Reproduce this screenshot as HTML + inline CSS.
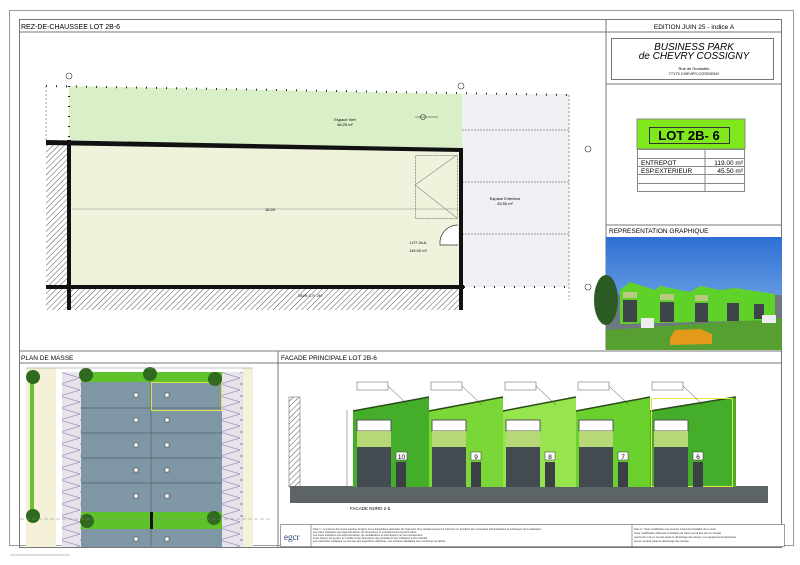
<!DOCTYPE html>
<html><head><meta charset="utf-8"><style>
html,body{margin:0;padding:0;background:#fff;width:800px;height:565px;overflow:hidden}
svg{display:block;font-family:"Liberation Sans",sans-serif}
</style></head><body>
<svg width="800" height="565" viewBox="0 0 800 565" xmlns="http://www.w3.org/2000/svg">
<defs>
<pattern id="h" width="4" height="4" patternUnits="userSpaceOnUse" patternTransform="rotate(45)"><rect width="4" height="4" fill="#fff"/><line x1="0" y1="0" x2="0" y2="4" stroke="#555" stroke-width="1"/></pattern>
<pattern id="z" width="20" height="12" patternUnits="userSpaceOnUse"><rect width="20" height="12" fill="#e6e3ea"/><path d="M0 0L20 6L0 12" fill="none" stroke="#a37fb0" stroke-width="0.6"/></pattern>
<linearGradient id="sky" x1="0" y1="0" x2="0" y2="1"><stop offset="0" stop-color="#2f6fd6"/><stop offset="1" stop-color="#8fbfe8"/></linearGradient>
</defs>
<!-- frames -->
<rect x="9.5" y="10.5" width="784" height="535" fill="none" stroke="#999"/>
<rect x="19.5" y="19.5" width="762" height="528" fill="none" stroke="#777"/>
<line x1="19" y1="32" x2="782" y2="32" stroke="#777"/>
<line x1="606" y1="19" x2="606" y2="350" stroke="#777"/>
<line x1="19" y1="351" x2="782" y2="351" stroke="#777"/>
<line x1="19" y1="363" x2="782" y2="363" stroke="#777"/>
<line x1="278" y1="351" x2="278" y2="547" stroke="#777"/>
<text x="21" y="29" font-size="7">REZ-DE-CHAUSSEE LOT 2B-6</text>
<text x="694" y="29" font-size="6.5" text-anchor="middle">EDITION JUIN 25 - indice A</text>
<!-- title box -->
<rect x="611.5" y="38.5" width="162" height="41" fill="#fff" stroke="#777"/>
<text x="694" y="50" font-size="10" font-style="italic" text-anchor="middle">BUSINESS PARK</text>
<text x="694" y="59" font-size="10" font-style="italic" text-anchor="middle">de CHEVRY COSSIGNY</text>
<text x="694" y="70" font-size="4" text-anchor="middle">Rue de l'Industrie</text>
<text x="694" y="75" font-size="4" text-anchor="middle">77173 CHEVRY-COSSIGNY</text>
<line x1="606" y1="84" x2="782" y2="84" stroke="#777"/>
<!-- LOT -->
<rect x="637" y="119" width="108" height="30" fill="#7ee81c" stroke="#888"/>
<rect x="649.5" y="127.5" width="80" height="16" fill="none" stroke="#333"/>
<text x="689" y="140" font-size="13" font-weight="bold" text-anchor="middle">LOT 2B- 6</text>
<rect x="637.5" y="149.5" width="107" height="42" fill="#fff" stroke="#888"/>
<line x1="705" y1="149" x2="705" y2="192" stroke="#888"/>
<line x1="637" y1="158.5" x2="745" y2="158.5" stroke="#888"/>
<line x1="637" y1="166.5" x2="745" y2="166.5" stroke="#888"/>
<line x1="637" y1="174.5" x2="745" y2="174.5" stroke="#888"/>
<line x1="637" y1="183.5" x2="745" y2="183.5" stroke="#888"/>
<text x="641" y="165" font-size="6.5">ENTREPOT</text>
<text x="641" y="173" font-size="6.5">ESP.EXTERIEUR</text>
<text x="743" y="165" font-size="6.5" text-anchor="end">119.00 m²</text>
<text x="743" y="173" font-size="6.5" text-anchor="end">45.50 m²</text>
<line x1="606" y1="225" x2="782" y2="225" stroke="#777"/>
<text x="609" y="233" font-size="6.5">REPRESENTATION GRAPHIQUE</text>
<!-- photo -->
<rect x="606" y="237" width="176" height="113" fill="url(#sky)"/>
<rect x="606" y="295" width="176" height="55" fill="#6f7880"/>
<path d="M606 330L782 318L782 350L606 350Z" fill="#55a030"/>
<path d="M620 290L630 282L655 290L660 286L690 292L700 286L720 290L735 288L775 294L775 320L620 324Z" fill="#5fd22a"/>
<g fill="#3e4448"><rect x="623" y="300" width="14" height="22"/><rect x="660" y="302" width="14" height="20"/><rect x="695" y="303" width="13" height="19"/><rect x="727" y="303" width="12" height="18"/><rect x="754" y="304" width="10" height="15"/></g>
<g fill="#b9c97f"><rect x="623" y="292" width="14" height="6"/><rect x="660" y="294" width="14" height="6"/><rect x="695" y="295" width="13" height="6"/></g>
<ellipse cx="606" cy="300" rx="12" ry="25" fill="#2c5a25"/>
<rect x="641" y="318" width="13" height="10" fill="#eee"/>
<rect x="762" y="315" width="14" height="8" fill="#eee"/>
<path d="M670 338L675 330L700 329L712 334L712 344L670 345Z" fill="#e39a1a"/>
<!-- floor plan -->
<path d="M69 86L462 94L462 150L69 140Z" fill="#d9efc7"/>
<rect x="462" y="94" width="107" height="193" fill="#eef0f3"/>
<line x1="462" y1="130" x2="569" y2="130" stroke="#999" stroke-dasharray="2,1"/>
<line x1="462" y1="182" x2="569" y2="182" stroke="#999" stroke-dasharray="2,1"/>
<line x1="462" y1="234" x2="569" y2="234" stroke="#999" stroke-dasharray="2,1"/>
<path d="M69 145L462 150L462 287L69 287Z" fill="#eff3dc"/>
<rect x="46" y="140" width="23" height="170" fill="url(#h)"/>
<rect x="69" y="287" width="393" height="23" fill="url(#h)"/>
<path d="M46 140L462 148L462 152L46 145Z" fill="#111"/>
<rect x="67" y="140" width="4" height="170" fill="#111"/>
<rect x="46" y="285" width="418" height="4" fill="#111"/>
<rect x="459" y="148" width="4" height="162" fill="#111"/>
<line x1="46" y1="86" x2="569" y2="95" stroke="#222" stroke-dasharray="1,9" stroke-width="2"/>
<line x1="69" y1="86" x2="69" y2="140" stroke="#222" stroke-dasharray="1,9" stroke-width="2"/>
<line x1="464" y1="287" x2="569" y2="287" stroke="#222" stroke-dasharray="1,9" stroke-width="2"/>
<line x1="46" y1="86" x2="46" y2="140" stroke="#999" stroke-dasharray="2,2"/>
<line x1="569" y1="95" x2="569" y2="300" stroke="#999" stroke-dasharray="2,2"/>
<rect x="415.5" y="155.5" width="42" height="63" fill="none" stroke="#999" stroke-dasharray="2,1"/>
<path d="M457 155L415 185L457 218" fill="none" stroke="#888" stroke-width="0.6"/>
<path d="M458 225A18 18 0 0 0 440 245L458 245" fill="#fff" stroke="#333" stroke-width="0.7"/>
<line x1="72" y1="209" x2="458" y2="209" stroke="#888" stroke-width="0.5"/>
<text x="265" y="211" font-size="4">16.20</text>
<text x="345" y="121" font-size="4" text-anchor="middle">Espace Vert</text>
<text x="345" y="126" font-size="4" text-anchor="middle">46.25 m²</text>
<text x="505" y="200" font-size="4" text-anchor="middle">Espace Exterieur</text>
<text x="505" y="205" font-size="4" text-anchor="middle">45.50 m²</text>
<text x="418" y="244" font-size="4" text-anchor="middle">LOT 2b-6</text>
<text x="418" y="252" font-size="4" text-anchor="middle">119.00 m²</text>
<text x="310" y="297" font-size="4" text-anchor="middle">MUR C.F. 2H</text>
<circle cx="69" cy="76" r="3" fill="none" stroke="#333" stroke-width="0.6"/>
<circle cx="461" cy="86" r="3" fill="none" stroke="#333" stroke-width="0.6"/>
<circle cx="588" cy="149" r="3" fill="none" stroke="#333" stroke-width="0.6"/>
<circle cx="588" cy="287" r="3" fill="none" stroke="#333" stroke-width="0.6"/>
<circle cx="423" cy="117" r="2.5" fill="none" stroke="#333" stroke-width="0.6"/>
<line x1="415" y1="117" x2="438" y2="117" stroke="#333" stroke-width="0.6"/>
<text x="21" y="360" font-size="6.5">PLAN DE MASSE</text>
<text x="281" y="360" font-size="6.5">FACADE PRINCIPALE LOT 2B-6</text>
<!-- plan de masse -->
<rect x="26" y="368" width="30" height="179" fill="#f4f1d8"/>
<rect x="30" y="372" width="4" height="140" fill="#6cc22c"/>
<rect x="243" y="368" width="10" height="179" fill="#f4f1d8"/>
<rect x="62" y="372" width="19" height="175" fill="url(#z)"/>
<rect x="222" y="372" width="21" height="175" fill="url(#z)"/>
<rect x="81" y="372" width="141" height="10" fill="#5fc22a"/>
<rect x="81" y="382" width="141" height="165" fill="#7f97a4"/>
<g stroke="#4f6470" stroke-width="0.7"><line x1="81" y1="408" x2="222" y2="408"/><line x1="81" y1="433" x2="222" y2="433"/><line x1="81" y1="458" x2="222" y2="458"/><line x1="81" y1="483" x2="222" y2="483"/><line x1="151" y1="382" x2="151" y2="547"/></g>
<rect x="151.5" y="382.5" width="70" height="28" fill="none" stroke="#dde04a"/>
<rect x="81" y="512" width="141" height="17" fill="#5fc22a"/>
<rect x="150" y="512" width="3" height="17" fill="#111"/>
<g fill="#fff" stroke="#333" stroke-width="0.5"><rect x="134" y="393" width="4" height="4"/><rect x="165" y="393" width="4" height="4"/><rect x="134" y="418" width="4" height="4"/><rect x="165" y="418" width="4" height="4"/><rect x="134" y="443" width="4" height="4"/><rect x="165" y="443" width="4" height="4"/><rect x="134" y="468" width="4" height="4"/><rect x="165" y="468" width="4" height="4"/><rect x="134" y="494" width="4" height="4"/><rect x="165" y="494" width="4" height="4"/><rect x="134" y="537" width="4" height="4"/><rect x="165" y="537" width="4" height="4"/></g>
<g fill="#2f6a1e"><circle cx="33" cy="377" r="7"/><circle cx="86" cy="375" r="7"/><circle cx="150" cy="374" r="7"/><circle cx="215" cy="379" r="7"/><circle cx="33" cy="516" r="7"/><circle cx="87" cy="521" r="7"/><circle cx="214" cy="518" r="7"/></g>
<line x1="20" y1="519" x2="270" y2="519" stroke="#888" stroke-dasharray="4,2" stroke-width="0.5"/>
<line x1="26" y1="368" x2="253" y2="368" stroke="#888" stroke-width="0.5"/>
<!-- facade -->
<rect x="289" y="397" width="11" height="90" fill="url(#h)" stroke="#555" stroke-width="0.5"/>
<rect x="290" y="486" width="478" height="17" fill="#5d6468"/>
<g id="b">
</g>
<path d="M353 411L429 397L429 487L353 487Z" fill="#44ad2a"/>
<path d="M429 411L503 397L503 487L429 487Z" fill="#7bd637"/>
<path d="M503 411L576 397L576 487L503 487Z" fill="#96e44e"/>
<path d="M576 411L650 397L650 487L576 487Z" fill="#6ad02e"/>
<path d="M650 411L736 397L736 487L650 487Z" fill="#44ad2a"/>
<g stroke="#2a4a1a" stroke-width="1.5"><line x1="353" y1="411" x2="429" y2="397"/><line x1="429" y1="411" x2="503" y2="397"/><line x1="503" y1="411" x2="576" y2="397"/><line x1="576" y1="411" x2="650" y2="397"/><line x1="650" y1="411" x2="736" y2="397"/></g>
<rect x="651.5" y="398.5" width="81" height="88" fill="none" stroke="#e6e640"/>
<g>
<rect x="357" y="420" width="34" height="11" fill="#fff" stroke="#555"/><rect x="357" y="431" width="34" height="16" fill="#b6d877"/><rect x="357" y="447" width="34" height="40" fill="#434a50"/><rect x="396" y="462" width="10" height="25" fill="#3b4045"/><rect x="396" y="452" width="11" height="8" fill="#fff" stroke="#333" stroke-width="0.5"/><text x="401.5" y="459" font-size="6.5" text-anchor="middle">10</text>
<rect x="432" y="420" width="34" height="11" fill="#fff" stroke="#555"/><rect x="432" y="431" width="34" height="16" fill="#b6d877"/><rect x="432" y="447" width="34" height="40" fill="#434a50"/><rect x="471" y="462" width="10" height="25" fill="#3b4045"/><rect x="471" y="452" width="10" height="8" fill="#fff" stroke="#333" stroke-width="0.5"/><text x="476" y="459" font-size="6.5" text-anchor="middle">9</text>
<rect x="506" y="420" width="34" height="11" fill="#fff" stroke="#555"/><rect x="506" y="431" width="34" height="16" fill="#b6d877"/><rect x="506" y="447" width="34" height="40" fill="#434a50"/><rect x="545" y="462" width="10" height="25" fill="#3b4045"/><rect x="545" y="452" width="10" height="8" fill="#fff" stroke="#333" stroke-width="0.5"/><text x="550" y="459" font-size="6.5" text-anchor="middle">8</text>
<rect x="579" y="420" width="34" height="11" fill="#fff" stroke="#555"/><rect x="579" y="431" width="34" height="16" fill="#b6d877"/><rect x="579" y="447" width="34" height="40" fill="#434a50"/><rect x="618" y="462" width="10" height="25" fill="#3b4045"/><rect x="618" y="452" width="10" height="8" fill="#fff" stroke="#333" stroke-width="0.5"/><text x="623" y="459" font-size="6.5" text-anchor="middle">7</text>
<rect x="654" y="420" width="34" height="11" fill="#fff" stroke="#555"/><rect x="654" y="431" width="34" height="16" fill="#b6d877"/><rect x="654" y="447" width="34" height="40" fill="#434a50"/><rect x="693" y="462" width="10" height="25" fill="#3b4045"/><rect x="693" y="452" width="10" height="8" fill="#fff" stroke="#333" stroke-width="0.5"/><text x="698" y="459" font-size="6.5" text-anchor="middle">6</text>
</g>
<g fill="#fff" stroke="#555" stroke-width="0.5"><rect x="357" y="382" width="31" height="8"/><rect x="431" y="382" width="31" height="8"/><rect x="505" y="382" width="31" height="8"/><rect x="578" y="382" width="31" height="8"/><rect x="652" y="382" width="31" height="8"/></g>
<g stroke="#444" stroke-width="0.5"><line x1="388" y1="386" x2="408" y2="405"/><line x1="462" y1="386" x2="482" y2="405"/><line x1="536" y1="386" x2="556" y2="405"/><line x1="609" y1="386" x2="629" y2="405"/><line x1="683" y1="386" x2="703" y2="405"/></g>
<line x1="347" y1="410" x2="347" y2="487" stroke="#555" stroke-width="0.5"/>
<text x="350" y="510" font-size="4.5">FACADE NORD 2-b</text>
<!-- footer -->
<rect x="280.5" y="524.5" width="504" height="22" fill="#fff" stroke="#777" stroke-width="0.7"/>
<line x1="311" y1="524" x2="311" y2="547" stroke="#777" stroke-width="0.7"/>
<line x1="632" y1="524" x2="632" y2="547" stroke="#777" stroke-width="0.7"/>
<text x="284" y="540" font-size="9" fill="#1a3a6a" font-family="Liberation Serif,serif">egcr</text>
<g font-size="2.6" fill="#333">
<text x="313" y="530">Note 1 : Le présent document exprime la figure et les dispositions générales de l'ogement. Des variations pourront intervenir en fonctions des nécessités administratives et techniques de la réalisation.</text>
<text x="313" y="533">Les cotes indiquées sont approximatives, les dimensions et emplacements pourront varier.</text>
<text x="313" y="536">Les cotes indiquées sont approximatives, les canalisations et interrupteurs ne sont représentés.</text>
<text x="313" y="539">Si les figures sur le plan, le mobilier et les dimensions des prestations sont indiquées à titre indicatif.</text>
<text x="313" y="542">Les superficies indiquées ne sont pas des superficies définitives. Les surfaces habitables sont conformes au décret.</text>
<text x="634" y="530">Note 2 : Toute modification est soumise à l'accord préalable de la vente.</text>
<text x="634" y="534">Toute modification effectuée à l'initiative du client pourra être pris en compte.</text>
<text x="634" y="538">pourra être pris en compte après le démarrage des travaux. Les équipements électriques</text>
<text x="634" y="542">pris en compte jusqu'au démarrage des travaux.</text>
</g>
<line x1="10" y1="555" x2="70" y2="555" stroke="#bbb"/>
</svg>
</body></html>
